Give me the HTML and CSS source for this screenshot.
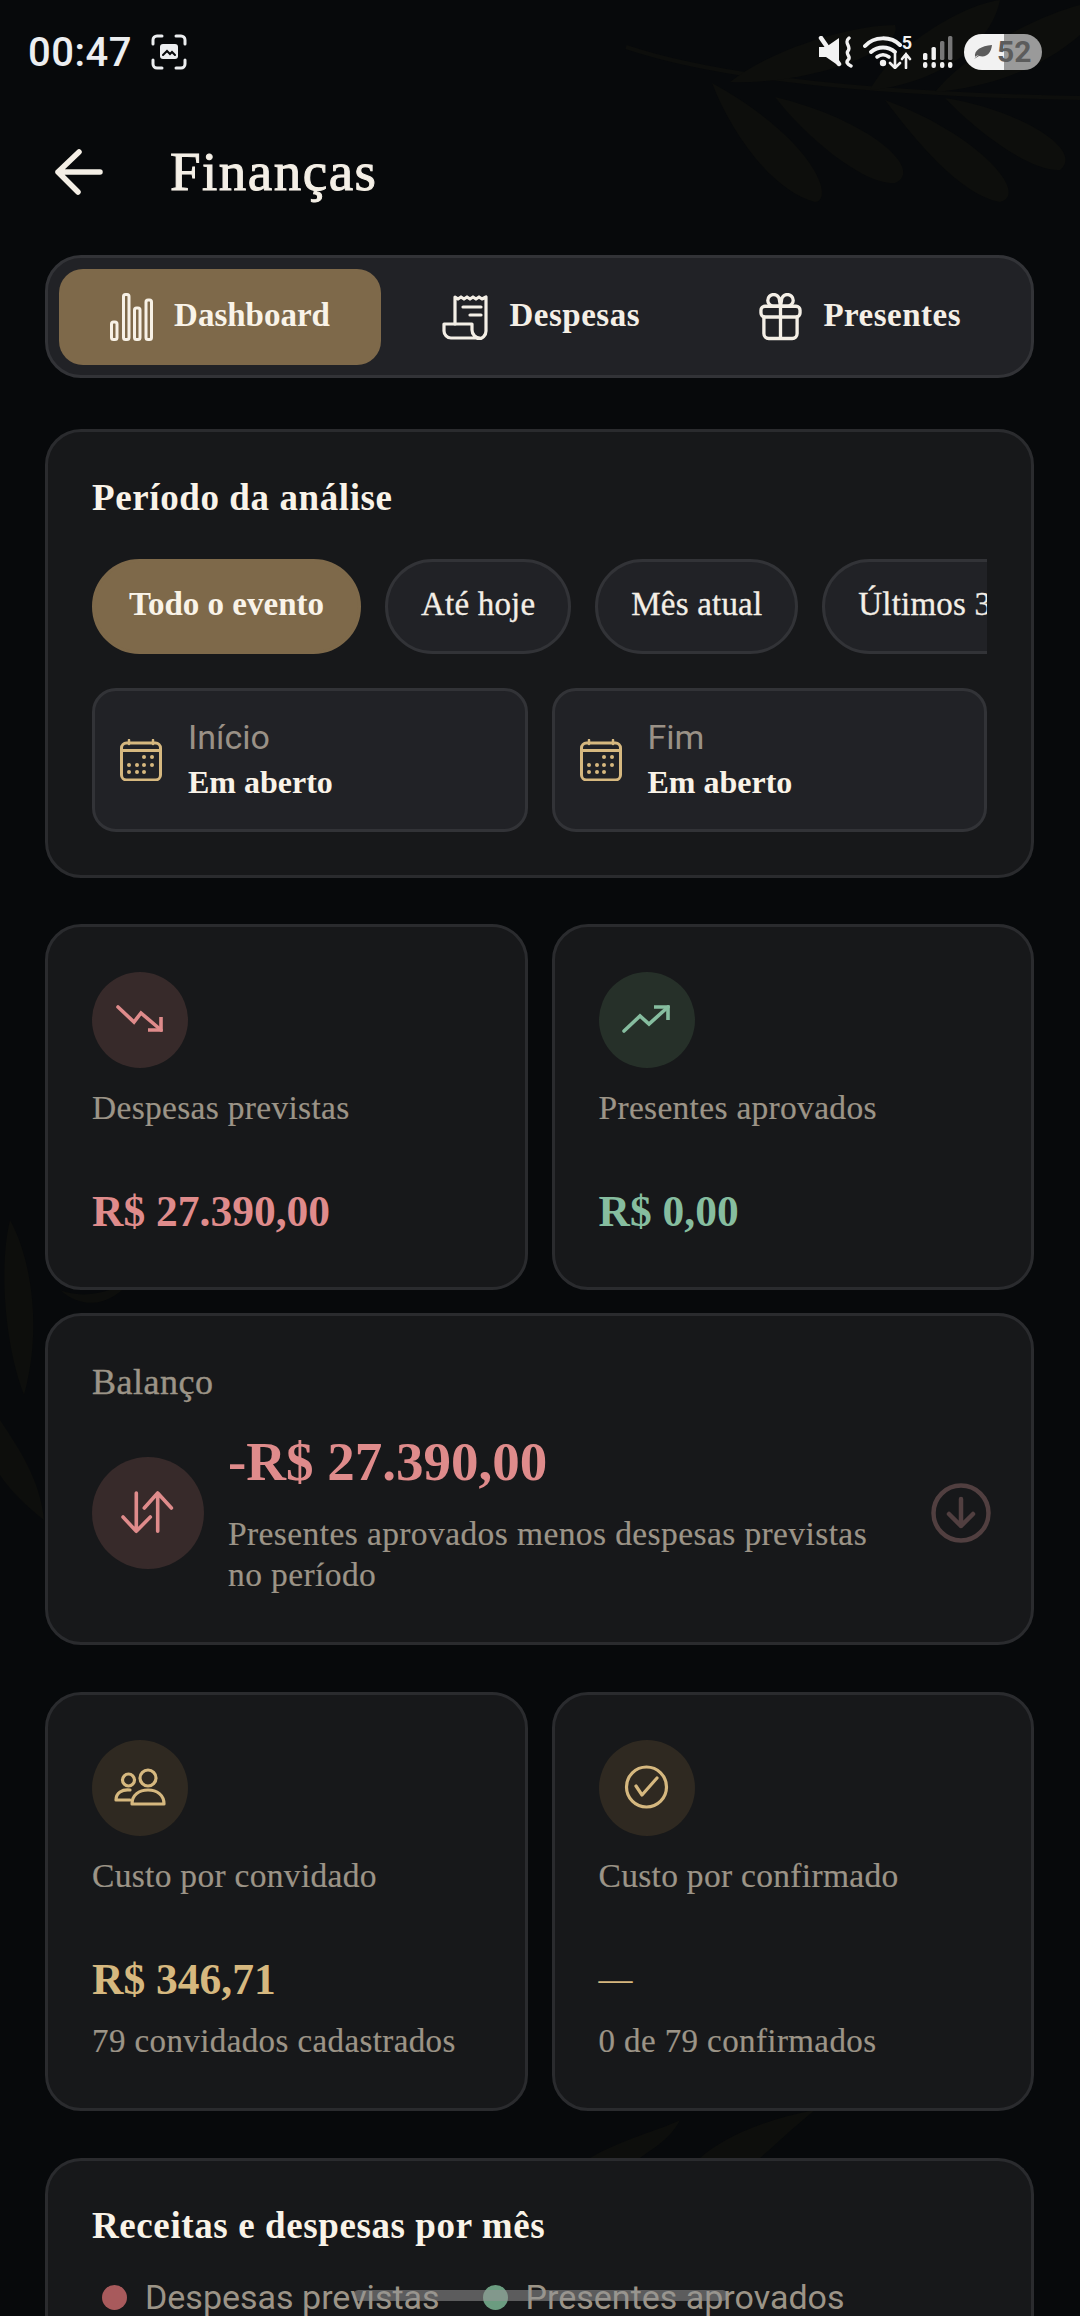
FILE: index.html
```html
<!DOCTYPE html>
<html lang="pt-BR">
<head>
    <meta charset="UTF-8">
    <meta name="viewport" content="width=device-width, initial-scale=1.0">
    <title>Finanças</title>
    <link rel="stylesheet" href="styles.css">
</head>
<body>
    <!-- folhas de fundo -->
    <svg class="leaves" viewBox="0 0 1080 2316" aria-hidden="true">
        <g fill="#0d0e0c">
            <path d="M626 47 Q760 92 1080 98" fill="none" stroke="#0d0e0c" stroke-width="4"/>
            <path d="M712 83 C730 130 770 190 815 202 C835 200 815 140 712 83Z"/>
            <path d="M775 97 C800 130 860 185 895 183 C925 170 870 120 775 97Z"/>
            <path d="M885 100 C915 140 960 195 1000 202 C1030 195 980 135 885 100Z"/>
            <path d="M945 98 C975 130 1030 172 1060 170 C1085 150 1020 110 945 98Z"/>
            <path d="M730 82 C770 50 850 25 895 25 C905 50 810 85 730 82Z"/>
            <path d="M870 90 C890 50 960 5 1000 0 C990 50 930 85 870 90Z"/>
            <path d="M935 92 C970 50 1040 15 1080 5 L1080 35 C1040 70 985 88 935 92Z"/>
            <path d="M10 1220 C-2 1270 6 1350 24 1395 C42 1330 32 1260 10 1220Z"/>
            <path d="M0 1420 C20 1450 40 1480 44 1520 C25 1505 10 1490 0 1475Z"/>
            <path d="M60 1290 C85 1300 115 1292 135 1275 C115 1305 85 1312 60 1290Z"/>
            <path d="M590 2158 C620 2140 660 2130 680 2120 C670 2140 650 2150 640 2158Z"/>
            <path d="M700 2158 C720 2140 760 2120 815 2110 C790 2130 770 2150 760 2158Z"/>
        </g>
    </svg>

    <div class="status-bar">
        <div class="status-left">
            <span class="clock">00:47</span>
            <svg class="shot-icon" viewBox="0 0 36 36" fill="none" stroke="#eceef0" stroke-width="3" stroke-linecap="round">
                <path d="M2 10V6a4 4 0 0 1 4-4h5M25 2h5a4 4 0 0 1 4 4v4M34 26v4a4 4 0 0 1-4 4h-5M11 34H6a4 4 0 0 1-4-4v-4"/>
                <rect x="9" y="10" width="18" height="15" rx="3" fill="#eceef0" stroke="none"/>
                <path d="M12 21l4-4 3 3 2-2 3 3" stroke="#07090b" stroke-width="2"/>
            </svg>
        </div>
        <div class="status-right">
            <svg class="st-mute" viewBox="0 0 35 32">
                <path fill="#f2f2f2" d="M1 11h7L21 2v28L8 21H1z"/>
                <path d="M1 0l23 32" stroke="#07090b" stroke-width="2"/>
                <path d="M3 2l18 26" stroke="#f2f2f2" stroke-width="4.500" stroke-linecap="round"/>
                <path d="M31 2c-6 5 3 8-1 13-3 3 4 6 0 9-2 2-1 4 3 6" fill="none" stroke="#f2f2f2" stroke-width="3.400" stroke-linecap="round"/>
            </svg>
            <div class="wifi-wrap">
                <svg class="st-wifi" viewBox="0 0 49 34" fill="none" stroke="#f2f2f2" stroke-linecap="round">
                    <path d="M2 11C11 1 28 1 37 10" stroke-width="4"/>
                    <path d="M8 17c7-6 17-6 24 0" stroke-width="4"/>
                    <path d="M14 22c4-3 8-3 12 0" stroke-width="3.600"/>
                    <circle cx="20" cy="28" r="3.200" fill="#f2f2f2" stroke="none"/>
                    <path d="M32 19v14m-5-5 5 5 5-5M43 33V19m-4 5 4-5 4 5" stroke-width="2.600"/>
                </svg>
                <span class="wifi-num">5</span>
            </div>
            <svg class="st-signal" viewBox="0 0 31 34">
                <g fill="#f2f2f2">
                    <rect x="1" y="18" width="4.400" height="7" rx="1.600"/>
                    <rect x="9.500" y="12" width="4.400" height="13" rx="1.600"/>
                    <rect x="1" y="27" width="4.400" height="6" rx="2"/>
                    <rect x="9.500" y="27" width="4.400" height="6" rx="2"/>
                    <rect x="18" y="27" width="4.400" height="6" rx="2"/>
                    <rect x="26" y="27" width="4.400" height="6" rx="2"/>
                </g>
                <rect x="18" y="6" width="4.400" height="19" rx="1.600" fill="#777"/>
                <rect x="26" y="1" width="4.400" height="24" rx="1.600" fill="#777"/>
            </svg>
            <div class="battery">
                <svg class="st-leaf" viewBox="0 0 20 16"><path fill="#5c5c5c" d="M1 15c2-2 3-3 5-4-2 0-3 1-4 2C1 6 8 2 19 1c-1 8-5 13-13 11"/></svg>
                <span class="battery-num">52</span>
            </div>
        </div>
    </div>

    <header class="top-bar">
        <svg class="back-icon" viewBox="0 0 48 46" fill="none" stroke="#f4efe6" stroke-width="5.500" stroke-linecap="round" stroke-linejoin="round">
            <path d="M45 23H3M24 3 3 23l20 20"/>
        </svg>
        <h1 class="page-title">Finanças</h1>
    </header>

    <main class="content">
        <nav class="tabs">
            <div class="tab active">
                <svg class="tab-icon" viewBox="0 0 43 48" fill="none" stroke="#f7f1e6" stroke-width="3" stroke-linejoin="round">
                    <rect x="1.500" y="29" width="5.500" height="17.500" rx="2"/>
                    <rect x="13.500" y="1.500" width="5.500" height="45" rx="2"/>
                    <rect x="24.500" y="15" width="5.500" height="31.500" rx="2"/>
                    <rect x="36" y="7" width="5.500" height="39.500" rx="2"/>
                </svg>
                <span>Dashboard</span>
            </div>
            <div class="tab">
                <svg class="tab-icon wide" viewBox="0 0 50 46" fill="none" stroke="#f4efe6" stroke-width="3.200" stroke-linecap="round" stroke-linejoin="round">
                    <path d="M14 30V3l3 2 3-2 3 2 3-2 3 2 3-2 3 2 3-2 3 2 4-2v34a8 8 0 0 1-8 8"/>
                    <path d="M3 30h28v6a8 8 0 0 0 8 8H10a7 7 0 0 1-7-7z"/>
                    <path d="M22 13h18M29 21h11"/>
                </svg>
                <span>Despesas</span>
            </div>
            <div class="tab">
                <svg class="tab-icon" viewBox="0 0 44 48" fill="none" stroke="#f4efe6" stroke-width="3.400" stroke-linecap="round" stroke-linejoin="round">
                    <rect x="2" y="13" width="40" height="11" rx="4"/>
                    <path d="M5 24v17a5 5 0 0 0 5 5h24a5 5 0 0 0 5-5V24M22 13v33"/>
                    <path d="M22 13h-7a6 6 0 1 1 6-6zM22 13h7a6 6 0 1 0-6-6z"/>
                </svg>
                <span>Presentes</span>
            </div>
        </nav>

        <section class="card period-card">
            <h2 class="card-title">Período da análise</h2>
            <div class="chips">
                <div class="chip active">Todo o evento</div>
                <div class="chip">Até hoje</div>
                <div class="chip">Mês atual</div>
                <div class="chip">Últimos 30 dias</div>
            </div>
            <div class="dates">
                <div class="date-box">
                    <svg class="cal-icon" viewBox="0 0 42 42"><use href="#cal"/></svg>
                    <div class="date-text">
                        <span class="date-label">Início</span>
                        <span class="date-value">Em aberto</span>
                    </div>
                </div>
                <div class="date-box">
                    <svg class="cal-icon" viewBox="0 0 42 42"><use href="#cal"/></svg>
                    <div class="date-text">
                        <span class="date-label">Fim</span>
                        <span class="date-value">Em aberto</span>
                    </div>
                </div>
            </div>
        </section>

        <div class="stat-grid">
            <section class="card stat-card">
                <div class="round-icon red-bg">
                    <svg viewBox="0 0 96 96" fill="none" stroke="#df8b8b" stroke-width="3.600" stroke-linecap="round">
                        <path d="M26 35l16 15 7-9 20 17"/>
                        <path d="M69 45v13H56" stroke-linecap="butt"/>
                    </svg>
                </div>
                <div class="stat-label">Despesas previstas</div>
                <div class="stat-value red">R$ 27.390,00</div>
            </section>
            <section class="card stat-card">
                <div class="round-icon green-bg">
                    <svg viewBox="0 0 96 96" fill="none" stroke="#86bd9f" stroke-width="3.600" stroke-linecap="round">
                        <path d="M25 59l16-15 9 8 19-17"/>
                        <path d="M55 35h14v13" stroke-linecap="butt"/>
                    </svg>
                </div>
                <div class="stat-label">Presentes aprovados</div>
                <div class="stat-value green">R$ 0,00</div>
            </section>
        </div>

        <section class="card balance-card">
            <div class="stat-label balance-label">Balanço</div>
            <div class="balance-row">
                <div class="round-icon big red-bg">
                    <svg viewBox="0 0 112 112" fill="none" stroke="#df8b8b" stroke-width="3.600" stroke-linecap="round" stroke-linejoin="round">
                        <path d="M44.300 36v38.300M31 60l13.300 14.300L58.300 60"/>
                        <path d="M65.700 74.300V36M52.300 51l13.400-15 13.700 15"/>
                    </svg>
                </div>
                <div class="balance-text">
                    <div class="balance-value">-R$ 27.390,00</div>
                    <div class="balance-note">Presentes aprovados menos despesas previstas no período</div>
                </div>
                <svg class="down-icon" viewBox="0 0 60 60" fill="none" stroke="#513f40" stroke-width="4.500" stroke-linecap="round" stroke-linejoin="round">
                    <circle cx="30" cy="30" r="27.500"/>
                    <path d="M30 16v27M18 31l12 12 12-12"/>
                </svg>
            </div>
        </section>

        <div class="stat-grid">
            <section class="card stat-card tall">
                <div class="round-icon gold-bg">
                    <svg viewBox="0 0 96 96" fill="none" stroke="#d6b87f" stroke-width="3.200" stroke-linecap="round" stroke-linejoin="round">
                        <circle cx="36.500" cy="40" r="6"/>
                        <circle cx="56" cy="38" r="8"/>
                        <path d="M38 60H24c0-7 6-11 14-10"/>
                        <path d="M40 64c0-9 7-14 16-14s16 5 16 14z"/>
                    </svg>
                </div>
                <div class="stat-label">Custo por convidado</div>
                <div class="stat-value gold">R$ 346,71</div>
                <div class="stat-note">79 convidados cadastrados</div>
            </section>
            <section class="card stat-card tall">
                <div class="round-icon gold-bg">
                    <svg viewBox="0 0 96 96" fill="none" stroke="#d6b87f" stroke-width="3.200" stroke-linecap="round" stroke-linejoin="round">
                        <circle cx="47.500" cy="47" r="20"/>
                        <path d="M37 46l6 9 15-17"/>
                    </svg>
                </div>
                <div class="stat-label">Custo por confirmado</div>
                <div class="stat-value gold dash">—</div>
                <div class="stat-note">0 de 79 confirmados</div>
            </section>
        </div>

        <section class="card chart-card">
            <h2 class="card-title">Receitas e despesas por mês</h2>
            <div class="legend">
                <span class="legend-item"><i class="dot dot-red"></i>Despesas previstas</span>
                <span class="legend-item"><i class="dot dot-green"></i>Presentes aprovados</span>
            </div>
        </section>
    </main>

    <div class="home-pill"></div>

    <!-- calendario usado nos dois campos de data -->
    <svg width="0" height="0" class="defs">
        <defs>
            <g id="cal">
                <rect x="1.500" y="4" width="39" height="37" rx="5" fill="none" stroke="#d6b87f" stroke-width="3"/>
                <path d="M2 11.500h38" stroke="#d6b87f" stroke-width="3"/>
                <path d="M9 1v4M33 1v4" stroke="#d6b87f" stroke-width="2.500" stroke-linecap="round"/>
                <g fill="#d6b87f">
                    <circle cx="24" cy="18" r="2"/><circle cx="32" cy="18" r="2"/>
                    <circle cx="9" cy="26" r="2"/><circle cx="17" cy="26" r="2"/><circle cx="24" cy="26" r="2"/><circle cx="32" cy="26" r="2"/>
                    <circle cx="9" cy="33" r="2"/><circle cx="17" cy="33" r="2"/><circle cx="24" cy="33" r="2"/>
                </g>
            </g>
        </defs>
    </svg>
</body>
</html>
```
FILE: styles.css
```css
* {
    box-sizing: border-box;
}
html, body {
    margin: 0;
    padding: 0;
}
body {
    position: relative;
    width: 1080px;
    height: 2316px;
    overflow: hidden;
    background-color: #07090b;
    color: #f7f1e6;
    font-family: "Liberation Serif", serif;
}
.leaves {
    position: absolute;
    top: 0;
    left: 0;
    width: 1080px;
    height: 2316px;
}
.defs {
    position: absolute;
}

/* barra de status */
.status-bar {
    position: relative;
    height: 104px;
    display: flex;
    align-items: center;
    justify-content: space-between;
    padding: 0 38px 0 28px;
}
.status-left {
    display: flex;
    align-items: center;
    gap: 19px;
}
.clock {
    font-family: Roboto, sans-serif;
    font-size: 40px;
    font-weight: 500;
    letter-spacing: 0.5px;
    color: #eceef0;
}
.shot-icon {
    width: 36px;
    height: 36px;
}
.status-right {
    display: flex;
    align-items: center;
}
.st-mute {
    width: 35px;
    height: 32px;
    margin-right: 10px;
}
.wifi-wrap {
    position: relative;
    width: 49px;
    height: 34px;
    margin-right: 10px;
}
.st-wifi {
    display: block;
    width: 49px;
    height: 34px;
}
.wifi-num {
    position: absolute;
    top: -1px;
    right: 0;
    font-family: Roboto, sans-serif;
    font-size: 18px;
    font-weight: 700;
    line-height: 18px;
    color: #f2f2f2;
}
.st-signal {
    width: 31px;
    height: 34px;
    margin-right: 11px;
}
.battery {
    width: 78px;
    height: 36px;
    border-radius: 18px;
    background: linear-gradient(90deg, #f2f2f2 0, #f2f2f2 40px, #9a9a9a 40px);
    display: flex;
    align-items: center;
    padding-left: 9px;
}
.st-leaf {
    width: 20px;
    height: 16px;
}
.battery-num {
    margin-left: 4px;
    font-family: Roboto, sans-serif;
    font-size: 30px;
    font-weight: 700;
    line-height: 36px;
    color: #5c5c5c;
}

/* titulo */
.top-bar {
    position: relative;
    height: 138px;
    display: flex;
    align-items: center;
    padding: 0 0 2px 55px;
    margin-bottom: 13px;
}
.back-icon {
    width: 48px;
    height: 46px;
}
.page-title {
    margin: 0 0 1px 67px;
    font-size: 55px;
    font-weight: 400;
    letter-spacing: 1.5px;
    color: #f4efe6;
    -webkit-text-stroke: 1px #f4efe6;
}

.content {
    position: relative;
    padding: 0 46px 0 45px;
}

/* abas */
.tabs {
    height: 123px;
    display: flex;
    align-items: center;
    padding: 0 11px;
    background-color: #212226;
    border: 3px solid #323337;
    border-radius: 36px;
    margin-bottom: 51px;
}
.tab {
    height: 96px;
    flex: 1 1 0;
    display: flex;
    align-items: center;
    justify-content: center;
    gap: 21px;
    border-radius: 24px;
    font-size: 33px;
    font-weight: 700;
    letter-spacing: 0.5px;
    color: #f4efe6;
}
.tab span {
    padding-bottom: 3px;
}
.tab.active {
    flex: 0 0 322px;
    background-color: #7e694a;
    letter-spacing: 0;
    color: #f9f3e8;
}
.tab-icon {
    width: 43px;
    height: 48px;
}
.tab-icon.wide {
    width: 50px;
    height: 46px;
    margin-right: -3px;
}

.card {
    background-color: #17181a;
    border: 3px solid #2a2b2e;
    border-radius: 36px;
}
.card-title {
    margin: 0;
    font-size: 37px;
    font-weight: 700;
    line-height: 44px;
    letter-spacing: 0.6px;
    color: #f9f3e8;
}

/* periodo */
.period-card {
    height: 449px;
    padding: 44px 44px 0;
    margin-bottom: 46px;
}
.chips {
    display: flex;
    gap: 24px;
    margin-top: 39px;
    overflow: hidden;
}
.chip {
    flex: none;
    height: 95px;
    display: flex;
    align-items: center;
    padding: 0 33px 4px;
    border: 3px solid #323337;
    border-radius: 48px;
    background-color: #212226;
    font-size: 33px;
    letter-spacing: 0.2px;
    color: #f4efe6;
    -webkit-text-stroke: 0.3px #f4efe6;
}
.chip.active {
    padding: 0 34px 4px;
    border-color: #7e694a;
    background-color: #7e694a;
    font-weight: 700;
    letter-spacing: 0;
    color: #f9f3e8;
    -webkit-text-stroke: 0;
}
.dates {
    display: grid;
    grid-template-columns: 1fr 1fr;
    gap: 24px;
    margin-top: 34px;
}
.date-box {
    height: 144px;
    display: flex;
    align-items: center;
    gap: 26px;
    padding-left: 25px;
    background-color: #212226;
    border: 3px solid #323337;
    border-radius: 24px;
}
.cal-icon {
    width: 42px;
    height: 42px;
    flex: none;
}
.date-text {
    display: flex;
    flex-direction: column;
    padding-bottom: 4px;
}
.date-label {
    font-family: Roboto, sans-serif;
    font-size: 34px;
    line-height: 47px;
    color: #9a9186;
}
.date-value {
    font-size: 32px;
    font-weight: 700;
    line-height: 42px;
    color: #f9f3e8;
}

/* indicadores */
.stat-grid {
    display: grid;
    grid-template-columns: 1fr 1fr;
    gap: 24px;
}
.stat-card {
    height: 366px;
    padding: 45px 44px 0;
}
.stat-card.tall {
    height: 419px;
}
.round-icon {
    width: 96px;
    height: 96px;
    border-radius: 50%;
}
.round-icon svg {
    display: block;
    width: 96px;
    height: 96px;
}
.round-icon.big {
    width: 112px;
    height: 112px;
    flex: none;
}
.round-icon.big svg {
    width: 112px;
    height: 112px;
}
.red-bg {
    background-color: #372a2a;
}
.green-bg {
    background-color: #263029;
}
.gold-bg {
    background-color: #2f2921;
}
.stat-label {
    margin-top: 20px;
    font-size: 33.5px;
    line-height: 40px;
    letter-spacing: 0.3px;
    color: #9c9487;
    -webkit-text-stroke: 0.2px #9c9487;
}
.stat-value {
    margin-top: 58px;
    font-size: 43.5px;
    font-weight: 700;
    line-height: 50px;
}
.stat-value.dash {
    font-size: 34px;
    font-weight: 400;
}
.stat-note {
    margin-top: 17px;
    font-size: 33px;
    line-height: 40px;
    letter-spacing: 0.4px;
    color: #9c9487;
    -webkit-text-stroke: 0.2px #9c9487;
}
.red {
    color: #df8b8b;
}
.green {
    color: #86bd9f;
}
.gold {
    color: #d6b87f;
}

/* balanco */
.balance-card {
    height: 332px;
    margin: 23px 0 47px;
    padding: 26px 40px 0 44px;
}
.balance-label {
    font-size: 36px;
    letter-spacing: 0.5px;
    -webkit-text-stroke: 0.4px #9c9487;
}
.balance-row {
    display: flex;
    align-items: center;
    margin-top: 29px;
}
.balance-text {
    flex: 1;
    margin-left: 24px;
}
.balance-value {
    font-size: 55px;
    font-weight: 700;
    line-height: 62px;
    color: #df8b8b;
}
.balance-note {
    width: 650px;
    margin-top: 20px;
    font-size: 33.5px;
    line-height: 41px;
    letter-spacing: 0.4px;
    color: #9c9487;
    -webkit-text-stroke: 0.2px #9c9487;
}
.down-icon {
    width: 60px;
    height: 60px;
    flex: none;
}

/* grafico: o card continua abaixo da dobra */
.chart-card {
    height: 158px;
    margin-top: 47px;
    padding: 43px 44px 0;
    border-bottom: 0;
    border-radius: 36px 36px 0 0;
}
.legend {
    display: flex;
    gap: 43px;
    margin-top: 29px;
    padding-left: 10px;
}
.legend-item {
    display: flex;
    align-items: center;
    gap: 18px;
    font-family: Roboto, sans-serif;
    font-size: 34px;
    line-height: 40px;
    color: #9c9487;
}
.dot {
    width: 25px;
    height: 25px;
    border-radius: 50%;
}
.dot-red {
    background-color: #a85a5c;
}
.dot-green {
    background-color: #6b9c80;
}

.home-pill {
    position: absolute;
    left: 353px;
    top: 2290px;
    width: 375px;
    height: 11px;
    border-radius: 6px;
    background-color: rgba(150, 150, 150, 0.55);
}
```
